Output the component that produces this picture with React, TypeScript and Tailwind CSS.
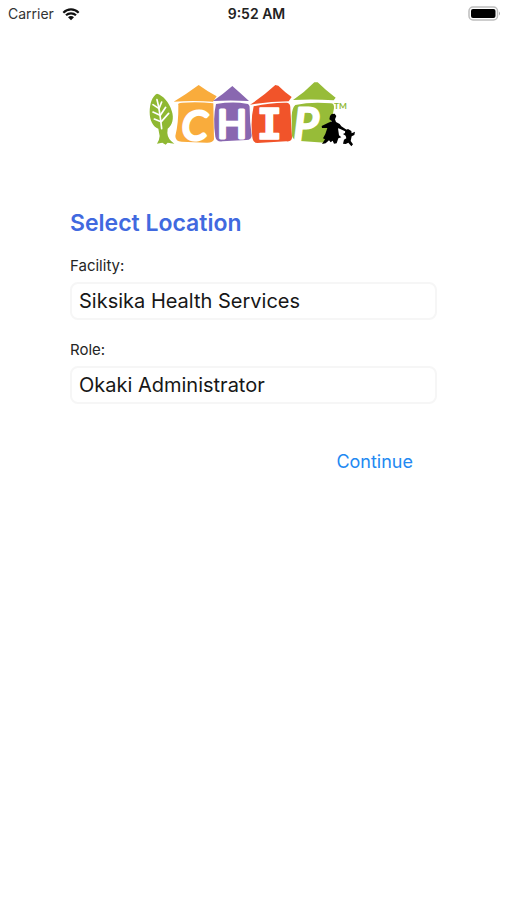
import React from "react";

function WifiIcon() {
  return (
    <svg width="18" height="13" viewBox="0 0 54 39" aria-hidden="true">
      <g fill="none" stroke="#111" strokeWidth="6.5">
        <path d="M4 14 C17 1 37 1 50 14" />
        <path d="M12 22 C20 14 34 14 42 22" />
      </g>
      <path d="M18 28 C23 23 31 23 36 28 L27 37Z" fill="#111" />
    </svg>
  );
}

function BatteryIcon() {
  return (
    <svg width="33" height="16" viewBox="0 0 33 16" aria-hidden="true">
      <rect x="1" y="1" width="28.5" height="13" rx="4" fill="#fff" stroke="#bdbdbd" strokeWidth="1.5" />
      <rect x="3" y="3" width="24.5" height="9" rx="2" fill="#000" />
      <path d="M31 5.5 Q33 7.5 31 9.5Z" fill="#aaa" />
    </svg>
  );
}

function ChipLogo() {
  return (
    <svg width="213" height="75" viewBox="0 0 639 225" role="img" aria-label="CHIP">
      <path
        d="M36 53 C22 60 14 82 14 108 C14 134 24 152 40 158 L44 180 Q43 194 36 203 L52 200 L62 206 L68 200 L88 203 Q68 190 67 171 L68 158 C82 148 88 126 80 104 C72 78 54 58 36 53Z"
        fill="#8fb832"
      />
      <g fill="none" stroke="#fff" strokeWidth="5" strokeLinecap="round">
        <path d="M36 71 Q44 100 50 158" />
        <path d="M42 98 L24 86 M45 118 L24 108 M48 137 L28 129 M42 98 L50 78 M46 118 L62 94 M49 137 L71 112" />
      </g>

      <path d="M86 77 Q122 56 161 27 Q187 46 215 61 L204 77 Q145 73 86 77Z" fill="#f9ac3c" />
      <path d="M100 88 Q96 80 112 80 Q158 76 205 82 L207 190 Q204 201 184 200 L110 197 Q91 197 91 180 Q101 140 100 88Z" fill="#f9ac3c" />
      <path d="M204 75 Q235 54 262 30 Q287 52 312 75 Q256 72 204 75Z" fill="#8967b0" />
      <path d="M213 84 Q264 76 304 83 Q315 83 314 98 Q314 140 320 178 Q320 192 304 192 L232 196 Q214 198 211 182 Q203 126 213 84Z" fill="#8967b0" />
      <path d="M315 86 Q354 61 391 27 L400 29 Q420 49 440 63 L431 76 Q374 77 315 86Z" fill="#f1542a" />
      <path d="M326 91 Q378 79 426 80 Q437 82 436 98 L441 184 Q441 198 424 196 L337 201 Q324 201 322 184 Q316 132 326 91Z" fill="#f1542a" />
      <path d="M444 72 Q478 50 508 19 L518 19 Q542 43 572 65 L566 73 Q504 68 444 72Z" fill="#97bc38" />
      <path d="M451 87 Q500 76 558 82 Q568 82 567 97 L562 122 L540 200 L466 195 Q444 194 441 180 L440 120 Q441 96 451 87Z" fill="#97bc38" />

      <g fill="#fff" stroke="#fff" strokeLinejoin="round" className="font-['Lato']" textAnchor="middle">
        <text x="149" y="192" fontSize="124" strokeWidth="9" fontStyle="italic">C</text>
        <text x="261" y="187" fontSize="118" strokeWidth="9">H</text>
        <text x="373" y="190" fontSize="126" strokeWidth="5" className="font-['DejaVu_Sans_Mono'] font-bold">I</text>
        <text x="483" y="192" fontSize="134" strokeWidth="9" fontStyle="italic">P</text>
      </g>

      <text x="567" y="100" fontSize="25" fill="#8fb832" className="font-['Lato'] font-bold">TM</text>

      <g fill="#000">
        <path d="M560 114 L569 113 L574 120 L570 130 L573 138 L584 144 L589 151 L607 163 L605 168 L584 158 L579 157 L582 178 L589 184 L580 187 L575 202 L567 203 L563 194 L557 199 L552 193 L542 202 L531 204 L540 190 L534 187 L541 174 L547 156 L531 156 L530 150 L550 140 L561 136 L553 130 L555 120Z" />
        <path d="M601 163 L609 159 L619 165 L620 172 L630 167 L628 177 L620 181 L617 195 L624 205 L619 211 L610 200 L602 204 L594 203 L597 191 L604 187 L602 179 L594 174 L600 171Z" />
      </g>
    </svg>
  );
}

interface FieldProps {
  id: string;
  label: string;
  value: string;
}

function Field({ id, label, value }: FieldProps) {
  return (
    <div>
      <label htmlFor={id} className="block text-[15px] leading-5 text-[#252525]">
        {label}
      </label>
      <select
        id={id}
        defaultValue={value}
        className="mt-1.5 block h-[38px] w-full appearance-none rounded-lg border-2 border-[#f6f6f6] bg-white px-[7px] text-xl text-[#171717]"
      >
        <option>{value}</option>
      </select>
    </div>
  );
}

export default function App() {
  return (
    <div className="min-h-screen bg-white font-['Inter','Liberation_Sans',sans-serif]">
      <header className="grid h-7 grid-cols-[1fr_auto_1fr] items-center pr-1.5 pl-2 text-sm text-[#333]">
        <div className="flex items-center gap-2">
          <span>Carrier</span>
          <WifiIcon />
        </div>
        <time className="pl-1 font-semibold text-[#222]">9:52 AM</time>
        <div className="flex justify-end">
          <BatteryIcon />
        </div>
      </header>

      <main className="px-[70px] pt-12">
        <div className="flex justify-center pr-1">
          <ChipLogo />
        </div>
        <form className="pt-14" onSubmit={(event) => event.preventDefault()}>
          <h1 className="text-[23px] leading-8 font-semibold text-[#4169df]">Select Location</h1>
          <div className="mt-[17px] space-y-5">
            <Field id="facility" label="Facility:" value="Siksika Health Services" />
            <Field id="role" label="Role:" value="Okaki Administrator" />
          </div>
          <div className="mt-10 flex justify-end pr-6">
            <button type="submit" className="h-9 text-lg text-[#2389f2]">
              Continue
            </button>
          </div>
        </form>
      </main>
    </div>
  );
}
